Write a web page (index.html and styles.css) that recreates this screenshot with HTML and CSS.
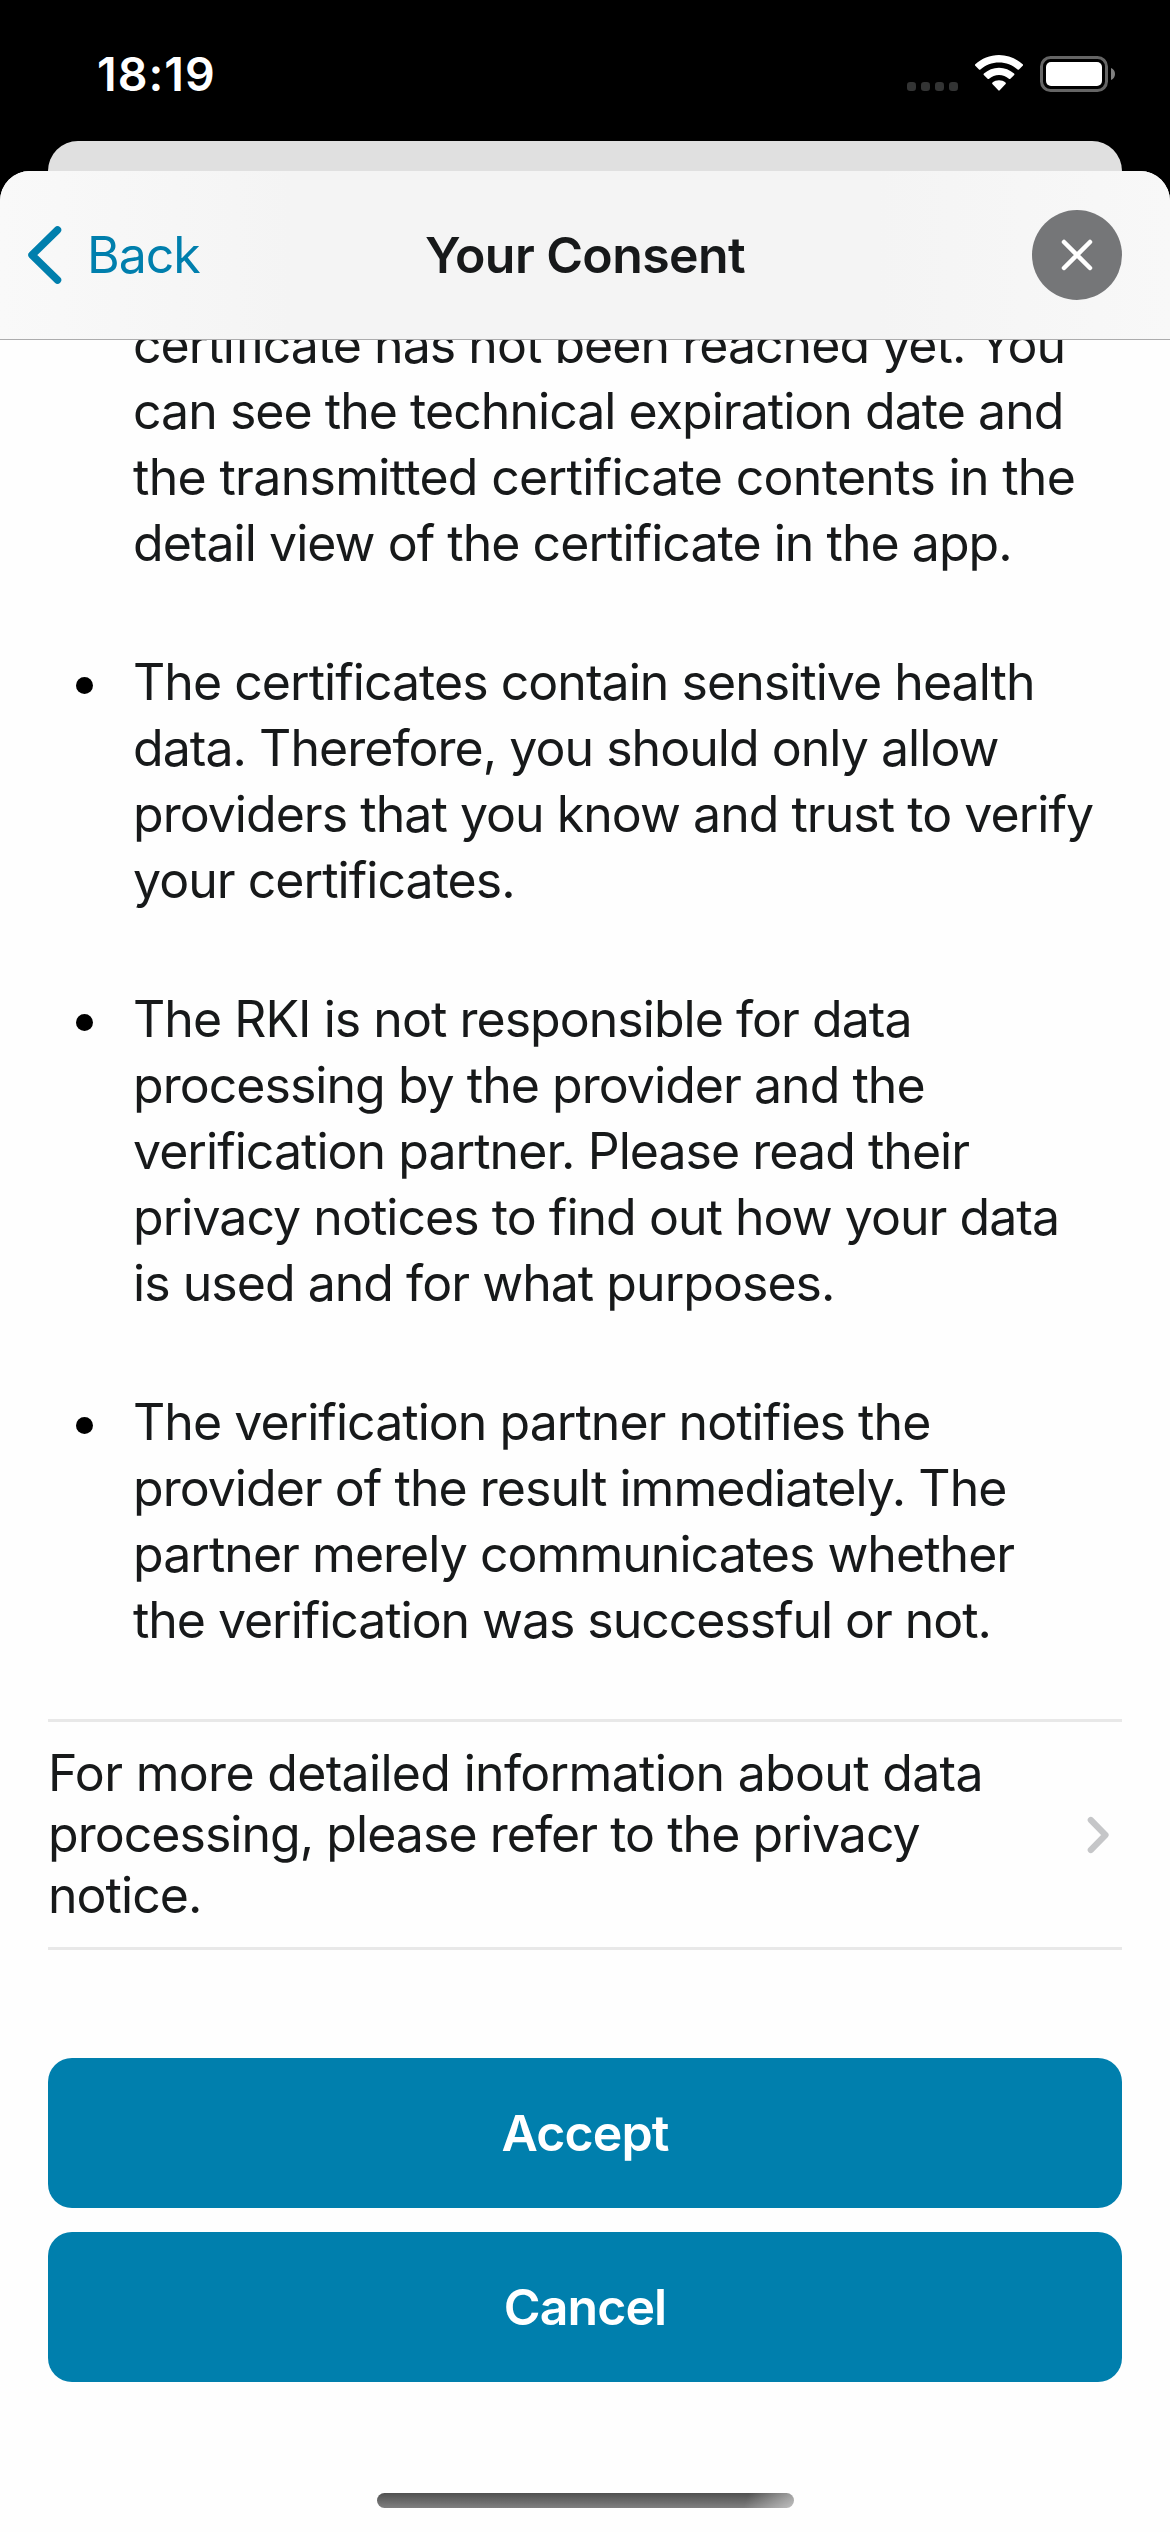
FILE: index.html
```html
<!DOCTYPE html>
<html lang="en">
<head>
<meta charset="utf-8">
<title>Your Consent</title>
<link rel="stylesheet" href="styles.css">
</head>
<body>
<div class="screen">
  <div class="status-bar">
    <span class="time">18:19</span>
    <svg class="status-icons" width="210" height="40" viewBox="0 0 210 40">
      <g fill="#333434">
        <rect x="2" y="29" width="9" height="9" rx="3.2"/>
        <rect x="16" y="29" width="9" height="9" rx="3.2"/>
        <rect x="30" y="29" width="9" height="9" rx="3.2"/>
        <rect x="44" y="29" width="9" height="9" rx="3.2"/>
      </g>
      <g fill="#fff">
        <path d="M94 2C103 2 111.500 5.500 117.700 11.300Q118.400 12 117.700 12.800L114 16.500Q113.300 17.100 112.600 16.500C107.500 11.900 101 9.400 94 9.400S80.500 11.900 75.400 16.500Q74.700 17.100 74 16.500L70.300 12.800Q69.600 12 70.300 11.300C76.500 5.500 85 2 94 2Z"/>
        <path d="M94 14.700C99.700 14.700 105 16.900 109.100 20.500Q109.900 21.300 109.200 22L105.400 25.700Q104.700 26.300 103.900 25.700C101.200 23.400 97.700 22 94 22S86.800 23.400 84.100 25.700Q83.300 26.300 82.600 25.700L78.800 22Q78.100 21.300 78.900 20.500C83 16.900 88.300 14.700 94 14.700Z"/>
        <path d="M94 27.200C96.400 27.200 98.700 28 100.500 29.400Q101.300 30.100 100.600 30.900L94.700 37.300Q94 38 93.300 37.300L87.400 30.900Q86.700 30.100 87.500 29.400C89.300 28 91.600 27.200 94 27.200Z"/>
      </g>
      <rect x="136.500" y="4.500" width="65" height="33" rx="9" fill="none" stroke="#656565" stroke-width="3"/>
      <rect x="141" y="9" width="56" height="24" rx="5" fill="#fff"/>
      <path d="M206 15C208.800 16.200 210 18.300 210 20.900S208.800 25.700 206 27Z" fill="#808080"/>
    </svg>
  </div>
  <div class="back-card"></div>
  <div class="sheet">
    <header class="nav">
      <div class="nav-back">
        <svg width="34" height="58" viewBox="0 0 34 58"><path d="M29.500 4 4 29l25.500 25" fill="none" stroke="#007fad" stroke-width="7.500" stroke-linecap="round" stroke-linejoin="round"/></svg>
        <span class="back-label">Back</span>
      </div>
      <h1 class="title">Your Consent</h1>
      <div class="close">
        <svg width="90" height="90" viewBox="0 0 90 90"><path d="M32 32 58 58M58 32 32 58" fill="none" stroke="#fff" stroke-width="4.500" stroke-linecap="round"/></svg>
      </div>
    </header>
    <main class="content">
      <ul class="notes">
        <li class="note first">certificate has not been reached yet. You<br>can see the technical expiration date and<br><span class="loose">the transmitted certificate contents in the</span><br>detail view of the certificate in the app.</li>
        <li class="note">The certificates contain sensitive health<br>data. Therefore, you should only allow<br>providers that you know and trust to verify<br>your certificates.</li>
        <li class="note">The RKI is not responsible for data<br>processing by the provider and the<br>verification partner. Please read their<br>privacy notices to find out how your data<br>is used and for what purposes.</li>
        <li class="note">The verification partner notifies the<br>provider of the result immediately. The<br>partner merely communicates whether<br><span class="tight">the verification was successful or not.</span></li>
      </ul>
      <div class="privacy-row">
        <p class="privacy-text"><span class="loose">For more detailed information about data</span><br>processing, please refer to the privacy<br>notice.</p>
        <svg class="disclosure" width="22" height="38" viewBox="0 0 22 38"><path d="M3.800 4 18.500 19 3.800 34" fill="none" stroke="#c5c6c8" stroke-width="6.200" stroke-linecap="round" stroke-linejoin="round"/></svg>
      </div>
      <div class="actions">
        <button class="button">Accept</button>
        <button class="button">Cancel</button>
      </div>
      <div class="home-indicator"></div>
    </main>
  </div>
</div>
</body>
</html>
```
FILE: styles.css
```css
* {
  box-sizing: border-box;
}

body {
  margin: 0;
  background: #000;
  color: #17191a;
  font-family: Inter, "Liberation Sans", sans-serif;
  font-size: 50px;
}

.screen {
  display: flex;
  flex-direction: column;
  width: 1170px;
  height: 2532px;
  overflow: hidden;
  background: #000;
}

.status-bar {
  display: flex;
  justify-content: space-between;
  align-items: flex-start;
  height: 141px;
  padding: 53px 55px 0 97px;
}

.time {
  color: #fff;
  font-size: 46.500px;
  font-weight: 600;
  line-height: 43px;
  letter-spacing: 1px;
}

.back-card {
  height: 30px;
  margin: 0 48px;
  border-radius: 30px 30px 0 0;
  background: #e0e0e0;
}

.sheet {
  display: flex;
  flex: 1;
  flex-direction: column;
  overflow: hidden;
  border-radius: 30px 30px 0 0;
  background: #fefefe;
}

.nav {
  display: grid;
  grid-template-columns: 1fr auto 1fr;
  align-items: center;
  height: 169px;
  padding: 0 48px 0 28px;
  border-bottom: 1px solid #acacad;
  background: linear-gradient(90deg, #f9f9f9, #f4f4f4 25%, #f4f4f4 75%, #f8f8f8);
}

.nav-back {
  display: flex;
  align-items: center;
  gap: 25px;
  color: #007fad;
}

.back-label {
  letter-spacing: -1px;
}

.title {
  margin: 0 0 0 20px;
  font-size: 50px;
  font-weight: 600;
  letter-spacing: -0.6px;
}

.close {
  justify-self: end;
  width: 90px;
  height: 90px;
  border-radius: 50%;
  background: #757678;
}

.close svg {
  display: block;
}

.content {
  display: flex;
  flex: 1;
  flex-direction: column;
  overflow: hidden;
  padding: 0 48px;
}

.notes {
  display: flex;
  flex-direction: column;
  gap: 73px;
  margin: -28px 0 66px;
  padding: 0;
  list-style: none;
}

.note {
  position: relative;
  padding-left: 85px;
  line-height: 66px;
  white-space: nowrap;
  letter-spacing: -0.96px;
}

.loose {
  letter-spacing: -0.68px;
}

.tight {
  letter-spacing: -1.05px;
}

.note::before {
  content: "";
  position: absolute;
  top: 28px;
  left: 28px;
  width: 17px;
  height: 17px;
  border-radius: 50%;
  background: #000;
}

.first::before {
  display: none;
}

.privacy-row {
  display: flex;
  justify-content: space-between;
  align-items: center;
  height: 231px;
  padding-right: 13px;
  border-top: 3px solid #e8e8e8;
  border-bottom: 3px solid #e8e8e8;
}

.privacy-text {
  margin: 0;
  line-height: 61px;
  white-space: nowrap;
  letter-spacing: -0.96px;
}

.actions {
  display: flex;
  flex-direction: column;
  gap: 24px;
  margin-top: 108px;
}

.button {
  height: 150px;
  padding: 0;
  border: 0;
  border-radius: 24px;
  background: #007fad;
  color: #fff;
  font: 600 50px Inter, "Liberation Sans", sans-serif;
  letter-spacing: -0.9px;
}

.home-indicator {
  align-self: center;
  width: 417px;
  height: 15px;
  margin-top: 111px;
  border-radius: 8px;
  background:
    linear-gradient(110deg, transparent 88%, rgba(255, 255, 255, 0.5) 100%),
    linear-gradient(#505050, #808080);
}
```
